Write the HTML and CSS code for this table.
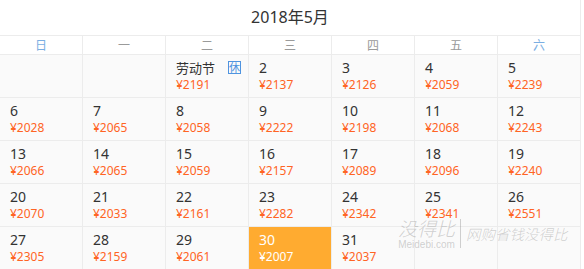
FILE: index.html
```html
<!DOCTYPE html>
<html lang="zh-CN">
<head>
<meta charset="utf-8">
<title>2018年5月</title>
<link rel="stylesheet" href="styles.css">
</head>
<body>
<div class="cal">
  <div class="title">2018年5月</div>
  <div class="weekdays">
    <div class="wd weekend">日</div>
    <div class="wd">一</div>
    <div class="wd">二</div>
    <div class="wd">三</div>
    <div class="wd">四</div>
    <div class="wd">五</div>
    <div class="wd weekend">六</div>
  </div>
  <div class="days">
    <div class="day empty"></div>
    <div class="day empty"></div>
    <div class="day"><div class="num label">劳动节</div><div class="price">¥2191</div><span class="rest">休</span></div>
    <div class="day"><div class="num">2</div><div class="price">¥2137</div></div>
    <div class="day"><div class="num">3</div><div class="price">¥2126</div></div>
    <div class="day"><div class="num">4</div><div class="price">¥2059</div></div>
    <div class="day"><div class="num">5</div><div class="price">¥2239</div></div>

    <div class="day"><div class="num">6</div><div class="price">¥2028</div></div>
    <div class="day"><div class="num">7</div><div class="price">¥2065</div></div>
    <div class="day"><div class="num">8</div><div class="price">¥2058</div></div>
    <div class="day"><div class="num">9</div><div class="price">¥2222</div></div>
    <div class="day"><div class="num">10</div><div class="price">¥2198</div></div>
    <div class="day"><div class="num">11</div><div class="price">¥2068</div></div>
    <div class="day"><div class="num">12</div><div class="price">¥2243</div></div>

    <div class="day"><div class="num">13</div><div class="price">¥2066</div></div>
    <div class="day"><div class="num">14</div><div class="price">¥2065</div></div>
    <div class="day"><div class="num">15</div><div class="price">¥2059</div></div>
    <div class="day"><div class="num">16</div><div class="price">¥2157</div></div>
    <div class="day"><div class="num">17</div><div class="price">¥2089</div></div>
    <div class="day"><div class="num">18</div><div class="price">¥2096</div></div>
    <div class="day"><div class="num">19</div><div class="price">¥2240</div></div>

    <div class="day"><div class="num">20</div><div class="price">¥2070</div></div>
    <div class="day"><div class="num">21</div><div class="price">¥2033</div></div>
    <div class="day"><div class="num">22</div><div class="price">¥2161</div></div>
    <div class="day"><div class="num">23</div><div class="price">¥2282</div></div>
    <div class="day"><div class="num">24</div><div class="price">¥2342</div></div>
    <div class="day"><div class="num">25</div><div class="price">¥2341</div></div>
    <div class="day"><div class="num">26</div><div class="price">¥2551</div></div>

    <div class="day"><div class="num">27</div><div class="price">¥2305</div></div>
    <div class="day"><div class="num">28</div><div class="price">¥2159</div></div>
    <div class="day"><div class="num">29</div><div class="price">¥2061</div></div>
    <div class="day selected"><div class="num">30</div><div class="price">¥2007</div></div>
    <div class="day"><div class="num">31</div><div class="price">¥2037</div></div>
    <div class="day empty"></div>
    <div class="day empty"></div>
  </div>
  <div class="watermark">
    <div class="wm-left">
      <div class="wm-big">没得比</div>
      <div class="wm-url">Meidebi.com</div>
    </div>
    <div class="wm-sep"></div>
    <div class="wm-slogan">网购省钱没得比</div>
  </div>
</div>
</body>
</html>
```

FILE: styles.css
```css
html, body {
  margin: 0;
  padding: 0;
  background: #ffffff;
}

body {
  font-family: "Noto Sans", "Noto Sans CJK SC", sans-serif;
  color: #333333;
}

.cal {
  position: relative;
  width: 581px;
}

.title {
  box-sizing: border-box;
  height: 35px;
  border-right: 1px solid #ececec;
  font-family: "Noto Sans", "Noto Sans CJK SC", sans-serif;
  font-size: 16px;
  line-height: 35px;
  text-align: center;
  color: #333333;
}

.weekdays {
  display: grid;
  grid-template-columns: repeat(7, 83px);
  border-top: 1px solid #ececec;
}

.wd {
  box-sizing: border-box;
  height: 19px;
  border-right: 1px solid #ececec;
  border-bottom: 1px solid #ececec;
  font-family: "Noto Sans CJK SC", sans-serif;
  font-size: 12px;
  line-height: 18px;
  text-align: center;
  color: #9a9a9a;
  background: #ffffff;
}

.wd.weekend {
  color: #7aaee2;
}

.days {
  display: grid;
  grid-template-columns: repeat(7, 83px);
}

.day {
  position: relative;
  box-sizing: border-box;
  height: 43px;
  padding: 4px 0 0 10px;
  border-right: 1px solid #ececec;
  border-bottom: 1px solid #ececec;
  background: #fafafa;
}

.num {
  font-size: 14px;
  line-height: 18px;
  color: #333333;
}

.num.label {
  font-family: "Noto Sans CJK SC", sans-serif;
  font-size: 13px;
}

.price {
  font-size: 12px;
  line-height: 16px;
  color: #ff6424;
}

.day.selected {
  background: #ffab30;
}

.day.selected .num,
.day.selected .price {
  color: #ffffff;
}

.rest {
  position: absolute;
  top: 6px;
  right: 7px;
  box-sizing: border-box;
  width: 13px;
  height: 13px;
  border: 1px solid #4f94e0;
  font-family: "Noto Sans CJK SC", sans-serif;
  font-size: 11px;
  line-height: 11px;
  text-align: center;
  color: #4f94e0;
}

.watermark {
  position: absolute;
  left: 398px;
  top: 217px;
  display: flex;
  align-items: center;
  gap: 5px;
  color: rgba(140, 140, 140, 0.4);
  pointer-events: none;
}

.wm-left {
  display: flex;
  flex-direction: column;
  align-items: center;
}

.wm-big {
  font-family: "Noto Sans CJK SC", sans-serif;
  font-size: 19px;
  line-height: 22px;
  font-weight: 300;
  font-style: italic;
}

.wm-url {
  font-family: "Liberation Sans", sans-serif;
  font-size: 10px;
  line-height: 11px;
}

.wm-sep {
  width: 1px;
  height: 29px;
  background: rgba(140, 140, 140, 0.4);
}

.wm-slogan {
  font-family: "Noto Sans CJK SC", sans-serif;
  font-size: 14.5px;
  line-height: 16px;
  font-weight: 300;
  font-style: italic;
}
```
